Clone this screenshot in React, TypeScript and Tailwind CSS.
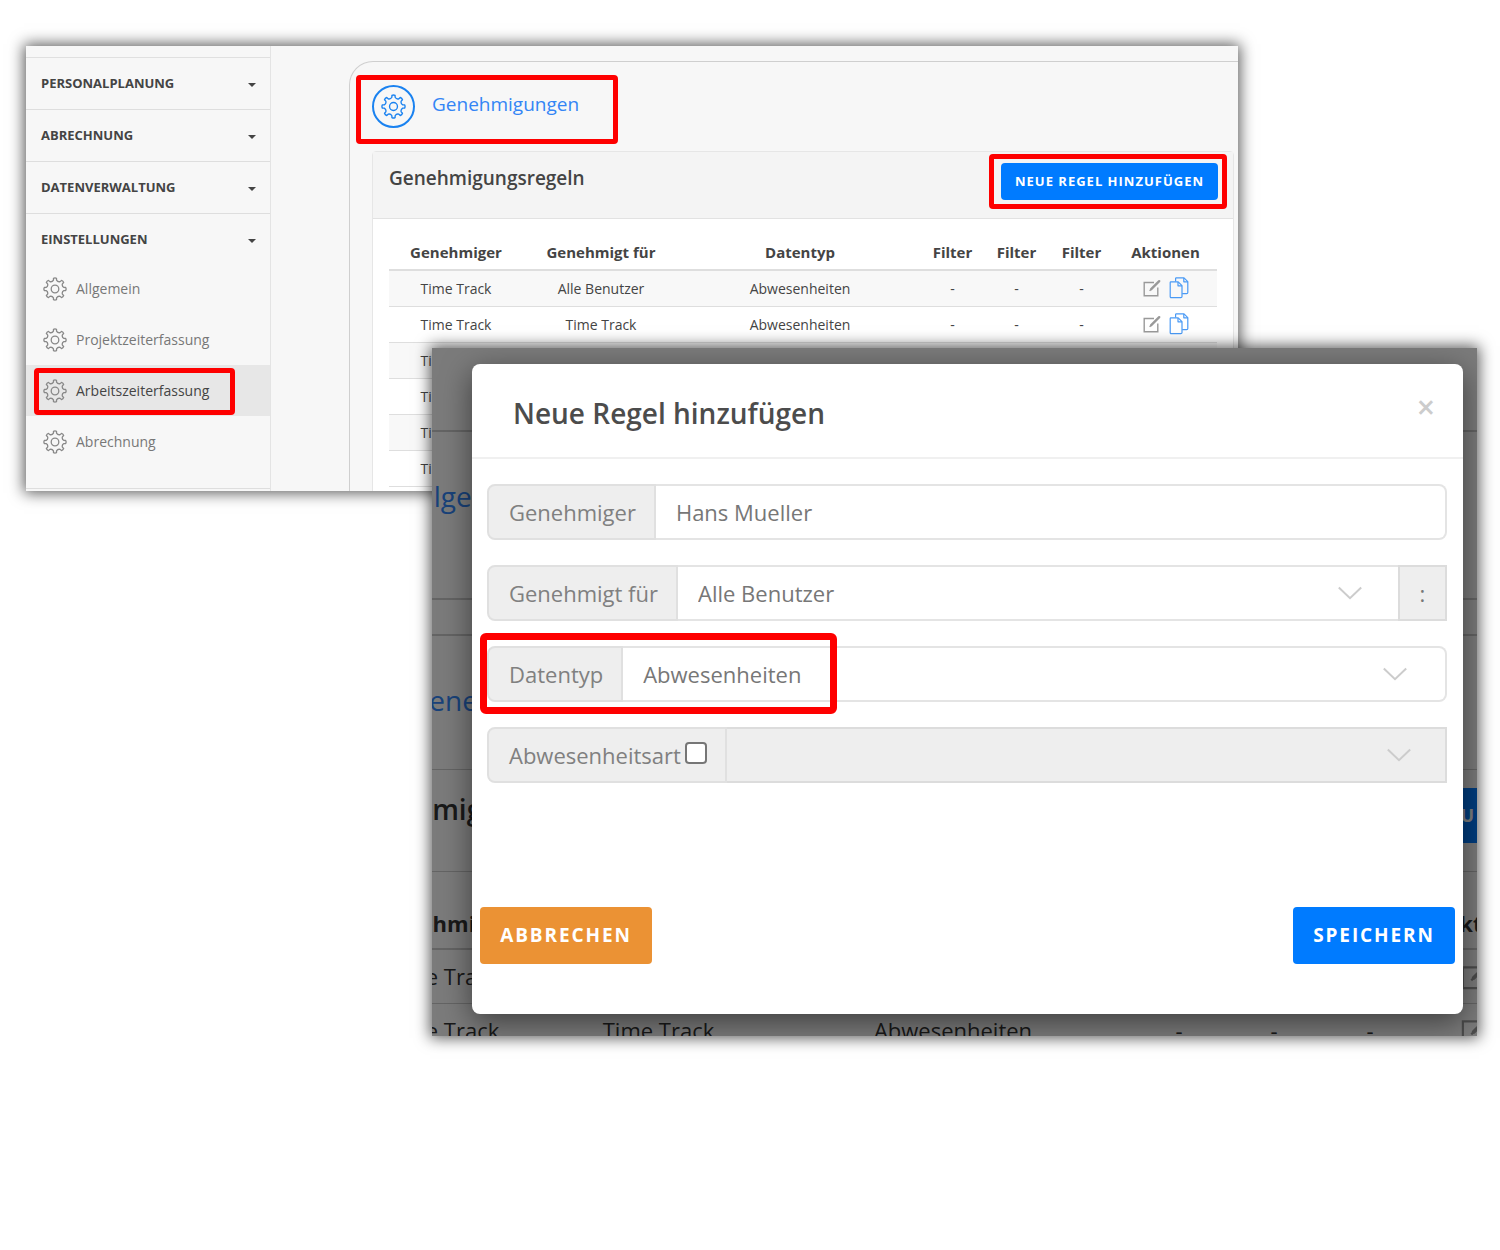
import React, { useState } from "react";

interface Rule {
  approver: string;
  approvedFor: string;
  dataType: string;
}

const sections = ["Personalplanung", "Abrechnung", "Datenverwaltung"];

const settings = ["Allgemein", "Projektzeiterfassung", "Arbeitszeiterfassung", "Abrechnung"];

const rules: Rule[] = [
  { approver: "Time Track", approvedFor: "Alle Benutzer", dataType: "Abwesenheiten" },
  { approver: "Time Track", approvedFor: "Time Track", dataType: "Abwesenheiten" },
  { approver: "Time Track", approvedFor: "Time Track", dataType: "Abwesenheiten" },
  { approver: "Time Track", approvedFor: "Time Track", dataType: "Abwesenheiten" },
  { approver: "Time Track", approvedFor: "Time Track", dataType: "Abwesenheiten" },
  { approver: "Time Track", approvedFor: "Time Track", dataType: "Abwesenheiten" },
];

const headings = ["Genehmiger", "Genehmigt für", "Datentyp", "Filter", "Filter", "Filter", "Aktionen"];

const polar = (radius: number, degrees: number) => {
  const angle = (degrees * Math.PI) / 180;
  return `${(12 + radius * Math.cos(angle)).toFixed(2)} ${(12 + radius * Math.sin(angle)).toFixed(2)}`;
};

// Eight teeth with curved valleys between them
const gearPath =
  Array.from({ length: 8 }, (_, i) => {
    const a = i * 45;
    return [
      `${i === 0 ? "M" : "L"}${polar(9, a - 10)}`,
      `L${polar(10.8, a - 8)}`,
      `Q${polar(11.5, a)} ${polar(10.8, a + 8)}`,
      `L${polar(9, a + 10)}`,
      `Q${polar(7.3, a + 22.5)} ${polar(9, a + 35)}`,
    ].join("");
  }).join("") + "Z";

const GearIcon = ({ className }: { className: string }) => (
  <svg viewBox="0 0 24 24" fill="none" stroke="currentColor" strokeWidth="1.3" strokeLinejoin="round" className={className}>
    <path d={gearPath} />
    <circle cx="12" cy="12" r="3.8" />
  </svg>
);

const EditIcon = ({ className }: { className: string }) => (
  <svg viewBox="0 0 18 18" fill="none" stroke="currentColor" className={className}>
    <path d="M11 3.5H1.2V16.8H14.8V8.5" strokeWidth="1.4" />
    <path d="M8.2 10.2 16.2 2.2" strokeWidth="2.4" strokeLinecap="round" />
    <path d="M6.6 11.8 8 10.4" strokeWidth="1.4" />
  </svg>
);

const CopyIcon = ({ className }: { className: string }) => (
  <svg viewBox="0 0 20 22" fill="none" stroke="currentColor" strokeWidth="1.2" strokeLinejoin="round" className={className}>
    <path d="M1.5 4.8H9.2L13 8.6V19.4Q13 20.6 11.8 20.6H2.2Q1.2 20.6 1.2 19.4V5.6Q1.2 4.8 2 4.8Z" />
    <path d="M9 5V8.8H13" />
    <path d="M6.6 4.6V1.6Q6.6 .8 7.4 .8H15L18.8 4.6V15.4Q18.8 16.6 17.6 16.6H13.2" />
    <path d="M14.8 1V4.8H18.8" />
  </svg>
);

const ChevronIcon = ({ className }: { className: string }) => (
  <svg viewBox="0 0 24 24" fill="none" stroke="currentColor" strokeWidth="2" className={className}>
    <path d="M.8 6.5 12 17.2 23.2 6.5" />
  </svg>
);

// Red marker drawn over the element it wraps
const Marker = ({ className }: { className: string }) => (
  <span
    aria-hidden="true"
    className={`pointer-events-none absolute z-10 border-[#fe0000] ${className}`}
  />
);

const Caret = () => (
  <span className="mt-[3px] h-0 w-0 border-x-4 border-t-4 border-x-transparent border-t-[#444]" />
);

const Sidebar = () => (
  <nav className="w-[245px] shrink-0 border-r border-[#e4e4e4] bg-[#f7f7f7]">
    <div className="h-3 border-b border-[#e0e0e0]" />
    {sections.map((section) => (
      <button
        key={section}
        className="flex h-[52px] w-full items-center justify-between border-b border-[#dedede] pr-[14px] pl-[15px] text-[13px] font-bold text-[#444] uppercase"
      >
        {section}
        <Caret />
      </button>
    ))}
    <button className="flex h-[49px] w-full items-center justify-between pt-0.5 pr-[14px] pl-[15px] text-[13px] font-bold text-[#444] uppercase">
      Einstellungen
      <Caret />
    </button>
    <ul>
      {settings.map((item) => {
        const active = item === "Arbeitszeiterfassung";
        return (
          <li key={item} className="relative">
            <a
              href="#"
              className={`flex h-[51px] items-center gap-[9px] pl-[17px] text-[14px] ${
                active ? "bg-[#e7e7e7] text-[#444]" : "text-[#777]"
              }`}
            >
              <GearIcon className="h-6 w-6 text-[#888]" />
              {item}
            </a>
            {active && <Marker className="top-[3px] bottom-px left-2 w-[201px] rounded border-[5px]" />}
          </li>
        );
      })}
    </ul>
    <div className="mt-[21px] border-t border-[#dedede]" />
  </nav>
);

const RuleTable = ({ rows, large = false }: { rows: Rule[]; large?: boolean }) => (
  <table className={`w-full table-fixed text-center ${large ? "text-[22px]" : "text-[14px]"}`}>
    <colgroup>
      <col className={large ? "w-[199px]" : "w-[134px]"} />
      <col className={large ? "w-[231px]" : "w-[156px]"} />
      <col />
      <col className={large ? "w-[94px]" : "w-[63px]"} />
      <col className={large ? "w-[96px]" : "w-[65px]"} />
      <col className={large ? "w-[96px]" : "w-[65px]"} />
      <col className={large ? "w-[153px]" : "w-[103px]"} />
    </colgroup>
    <thead>
      <tr className={large ? "h-[77px] border-b-2 border-[#c8c8c8]" : "h-[34px] border-b-2 border-[#dedede]"}>
        {headings.map((heading, index) => (
          <th key={index} className={large ? "pt-[26px] font-bold" : "text-[15px] font-bold"}>
            {heading}
          </th>
        ))}
      </tr>
    </thead>
    <tbody>
      {rows.map((rule, index) => (
        <tr
          key={index}
          className={
            large ? "h-[54px] border-b border-[#c8c8c8]" : "h-9 border-b border-[#dedede] odd:bg-[#f8f8f8]"
          }
        >
          <td>{rule.approver}</td>
          <td>{rule.approvedFor}</td>
          <td>{rule.dataType}</td>
          <td>-</td>
          <td>-</td>
          <td>-</td>
          <td>
            <div className={`flex items-center justify-center ${large ? "gap-3" : "gap-2"}`}>
              <button aria-label="Bearbeiten" className="text-[#999]">
                <EditIcon className={large ? "h-7 w-7" : "h-[18px] w-[18px]"} />
              </button>
              <button aria-label="Kopieren" className="text-[#4a9af5]">
                <CopyIcon className={large ? "h-8 w-7" : "h-[22px] w-5"} />
              </button>
            </div>
          </td>
        </tr>
      ))}
    </tbody>
  </table>
);

const SettingsWindow = ({ onAdd }: { onAdd: () => void }) => (
  <section className="mr-[262px] ml-[26px] flex h-[445px] overflow-hidden bg-[#f7f7f7] shadow-[0_0_14px_2px_rgba(0,0,0,0.65)]">
    <Sidebar />
    <div className="min-w-0 flex-1 overflow-hidden pt-[15px] pl-[78px]">
      <div className="h-[480px] rounded-tl-3xl border-t border-l border-[#cfcfcf] pt-[22px] pr-1 pl-[22px]">
        <div className="relative flex h-[44px] items-center gap-[17px]">
          <span className="flex h-[43px] w-[43px] items-center justify-center rounded-full border-2 border-[#1a82f0] text-[#1a82f0]">
            <GearIcon className="h-[25px] w-[25px]" />
          </span>
          <h1 className="pb-1 text-[19px] text-[#3385f5]">Genehmigungen</h1>
          <Marker className="-top-[9px] -bottom-4 -left-4 w-[262px] rounded border-[5px]" />
        </div>
        <div className="mt-[23px] rounded-t border border-[#e6e6e6] bg-white text-[#444]">
          <div className="flex h-[67px] justify-between border-b border-[#e2e2e2] bg-[#f4f4f4] pt-[11px] pr-[15px] pl-4">
            <h2 className="pt-px text-[19px] font-semibold">Genehmigungsregeln</h2>
            <div className="relative h-[37px]">
              <button
                onClick={onAdd}
                className="h-full w-[217px] rounded bg-[#007bff] text-[13px] font-bold tracking-[1px] text-white uppercase"
              >
                Neue Regel hinzufügen
              </button>
              <Marker className="-top-[9px] -right-[9px] -bottom-[9px] -left-3 rounded border-[5px]" />
            </div>
          </div>
          <div className="px-4 pt-[17px] pb-6">
            <RuleTable rows={rules} />
          </div>
        </div>
      </div>
    </div>
  </section>
);

// Enlarged page that shows through around the dialog
const Backdrop = () => (
  <div aria-hidden="true" className="absolute inset-0 overflow-hidden bg-[#f7f7f7] text-[#333]">
    <div className="-mr-[94px] -ml-[88px]">
      <div className="h-[84px] border-b-2 border-[#c8c8c8]" />
      <div className="h-[168px] border-b-2 border-[#c8c8c8] pt-[43px] pl-[65px] text-[28px] text-[#3385f5]">
        Allgemein
      </div>
      <div className="h-[36px] border-b-2 border-[#c8c8c8]" />
      <div className="h-[134px] border-b border-[#c8c8c8] pt-[43px] pl-[65px] text-[28px] text-[#3385f5]">
        Genehmigungen
      </div>
      <div className="flex h-[102px] justify-between border-b border-[#c8c8c8] pt-[18px]">
        <span className="text-[28px] font-semibold">Genehmigungsregeln</span>
        <span className="flex h-[55px] w-[320px] items-center justify-center rounded bg-[#007bff] text-[18px] font-bold tracking-widest whitespace-nowrap text-white uppercase">
          Neue Regel hinzufügen
        </span>
      </div>
      <RuleTable rows={rules.slice(0, 2)} large />
    </div>
    <div className="absolute inset-0 bg-black/50" />
  </div>
);

const FieldLabel = ({ htmlFor, children }: { htmlFor: string; children: React.ReactNode }) => (
  <label
    htmlFor={htmlFor}
    className="flex shrink-0 items-center rounded-l-lg border-2 border-[#e0e0e0] bg-[#eee] pr-[18px] pl-5 text-[#808080]"
  >
    {children}
  </label>
);

const Dialog = ({ onClose }: { onClose: () => void }) => {
  const [approver, setApprover] = useState("Hans Mueller");
  const [withType, setWithType] = useState(false);

  return (
    <div
      role="dialog"
      aria-labelledby="dialog-title"
      className="relative flex h-full flex-col rounded-lg bg-white shadow-[0_8px_30px_rgba(0,0,0,0.5)]"
    >
      <div className="flex h-[95px] items-center justify-between border-b-2 border-[#f0f0f0] pr-6 pl-[41px]">
        <h2 id="dialog-title" className="pt-1 text-[28px] font-semibold text-[#4c4c4c]">
          Neue Regel hinzufügen
        </h2>
        <button
          aria-label="Schließen"
          onClick={onClose}
          className="px-1 pb-2 text-[32px] leading-none font-semibold text-[#ccc]"
        >
          ×
        </button>
      </div>
      <form className="flex flex-1 flex-col gap-[25px] pt-[25px] pr-4 pl-[15px] text-[22px] text-[#777]">
        <div className="flex h-14">
          <FieldLabel htmlFor="approver">Genehmiger</FieldLabel>
          <input
            id="approver"
            value={approver}
            onChange={(e) => setApprover(e.target.value)}
            className="min-w-0 flex-1 rounded-r-lg border-2 border-l-0 border-[#e4e4e4] px-5"
          />
        </div>
        <div className="flex h-14">
          <FieldLabel htmlFor="approved-for">Genehmigt für</FieldLabel>
          <div className="relative flex-1">
            <select
              id="approved-for"
              className="h-full w-full appearance-none border-y-2 border-[#e4e4e4] bg-white px-5"
            >
              <option>Alle Benutzer</option>
              <option>Time Track</option>
            </select>
            <ChevronIcon className="pointer-events-none absolute top-4 right-9 h-6 w-6 text-[#ccc]" />
          </div>
          <button type="button" className="w-[49px] border-2 border-[#dcdcdc] bg-[#eee]">
            :
          </button>
        </div>
        <div className="relative flex h-14">
          <FieldLabel htmlFor="data-type">Datentyp</FieldLabel>
          <div className="relative flex-1">
            <select
              id="data-type"
              className="h-full w-full appearance-none rounded-r-lg border-2 border-l-0 border-[#e4e4e4] bg-white px-5"
            >
              <option>Abwesenheiten</option>
            </select>
            <ChevronIcon className="pointer-events-none absolute top-4 right-10 h-6 w-6 text-[#ccc]" />
          </div>
          <Marker className="-top-[13px] -bottom-3 -left-[7px] w-[357px] rounded-md border-[7px]" />
        </div>
        <div className="flex h-14">
          <FieldLabel htmlFor="with-type">
            Abwesenheitsart
            <input
              id="with-type"
              type="checkbox"
              checked={withType}
              onChange={(e) => setWithType(e.target.checked)}
              className="mb-1 ml-1 h-[22px] w-[22px] appearance-none rounded border-2 border-[#767676] bg-white checked:bg-[#007bff]"
            />
          </FieldLabel>
          <div className="relative flex-1">
            <select
              aria-label="Abwesenheitsart"
              disabled={!withType}
              className="h-full w-full appearance-none border-2 border-l-0 border-[#dcdcdc] bg-[#eee] px-5"
            />
            <ChevronIcon className="pointer-events-none absolute top-4 right-9 h-6 w-6 text-[#ccc]" />
          </div>
        </div>
      </form>
      <div className="flex justify-between px-2 pb-[50px] text-[19px] font-bold tracking-widest text-white">
        <button onClick={onClose} className="h-[57px] w-[172px] rounded bg-[#eb9234] uppercase">
          Abbrechen
        </button>
        <button onClick={onClose} className="h-[57px] w-[162px] rounded bg-[#007bff] uppercase">
          Speichern
        </button>
      </div>
    </div>
  );
};

const App: React.FC = () => {
  const [open, setOpen] = useState(true);

  return (
    <main className="relative min-h-screen overflow-hidden bg-white pt-[46px] font-['Open_Sans','Noto_Sans',sans-serif]">
      <SettingsWindow onAdd={() => setOpen(true)} />
      {open && (
        <div className="absolute top-[348px] right-[23px] left-[432px] h-[688px] shadow-[0_0_14px_2px_rgba(0,0,0,0.65)]">
          <Backdrop />
          <div className="h-full overflow-hidden pt-4 pr-[14px] pb-[22px] pl-10">
            <Dialog onClose={() => setOpen(false)} />
          </div>
        </div>
      )}
    </main>
  );
};

export default App;
